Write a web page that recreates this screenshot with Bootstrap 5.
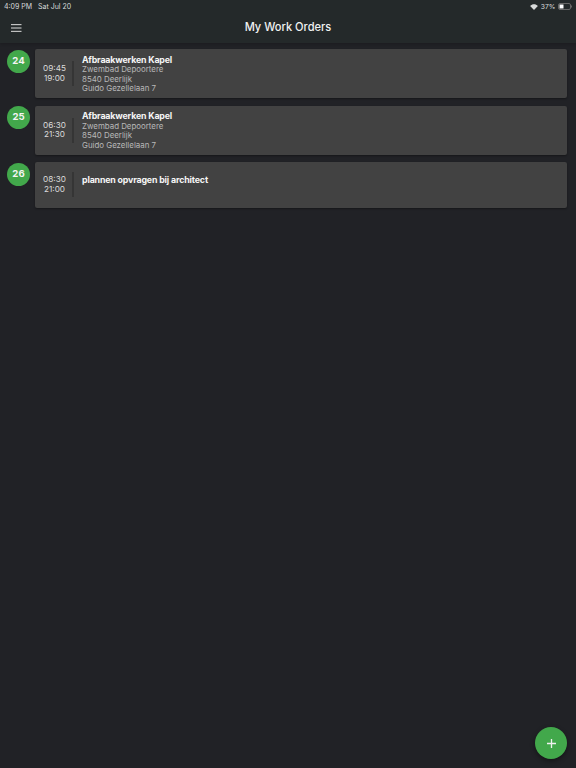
<!DOCTYPE html>
<html lang="en">
<head>
<meta charset="utf-8">
<title>My Work Orders</title>
<link rel="stylesheet" href="https://cdn.jsdelivr.net/npm/bootstrap@5.3.0/dist/css/bootstrap.min.css">
<style>
html,body{height:100%}
body{background:#212226;font-family:Inter,"Liberation Sans",sans-serif;color:#fff;width:576px;height:768px;overflow:hidden}
.screen{height:768px;position:relative}
.topbar{background:#24292a;height:43px;box-shadow:0 1px 3px rgba(0,0,0,.2)}
.status{height:13px;font-size:7px;line-height:13px;padding:0 4px;color:#d8dada}
.titlerow{height:30px;padding:0 11px}
.page-title{font-size:11.100px;font-weight:500;color:#f0f1f1;margin:0;line-height:1}
.titlewrap{height:30px}
.orders{padding:6px 9px 0 7px;gap:7.500px}
.day{width:23px;height:23px;border-radius:50%;background:#42a84b;font-size:9.600px;font-weight:700;color:#f4f4f4;flex:none;margin-top:.5px}
.wo{background:#424242;border-radius:2px;box-shadow:0 1px 2px rgba(0,0,0,.35);flex:1;margin-left:5px;height:49px}
.wo-short{height:45.500px}
.times{width:37px;flex:none;font-size:8.200px;line-height:9.600px;color:#dcdcdc;text-align:center;padding:.5px 0 0 2px}
.sep{width:1.500px;height:25px;background:#353535;margin-right:8.500px;flex:none}
.body-text{padding-top:5.500px}
.body-short{padding-top:12.500px}
.wo-title{font-size:8.800px;font-weight:700;line-height:10.500px;color:#f6f6f6;letter-spacing:-.15px}
.wo-line{font-size:7.900px;line-height:9.500px;color:#b8b8b8}
.fab{position:absolute;right:9px;bottom:9px;width:32px;height:32px;border-radius:50%;background:#42a84b;box-shadow:0 2px 5px rgba(0,0,0,.4);padding:0;border:0}
.sb-gap{gap:2.500px}
.pct{font-size:6.800px}
</style>
</head>
<body>
<div class="screen d-flex flex-column">
  <header class="topbar flex-shrink-0">
    <div class="status d-flex justify-content-between align-items-center">
      <span>4:09 PM&nbsp;&nbsp;&nbsp;Sat Jul 20</span>
      <span class="d-flex align-items-center sb-gap">
        <svg width="8" height="6" viewBox="0 0 18 14" aria-hidden="true"><path d="M9 14 0 4.500C5-.5 13-.5 18 4.500Z" fill="#d8dada"/></svg>
        <span class="pct">37%</span>
        <svg width="14" height="7" viewBox="0 0 14 7" aria-hidden="true"><rect x=".5" y=".5" width="12" height="6" rx="1.500" fill="none" stroke="#666"/><rect x="1.500" y="1.500" width="4" height="4" fill="#fff"/><rect x="13" y="2.500" width="1" height="2" fill="#666"/></svg>
      </span>
    </div>
    <div class="titlerow position-relative d-flex align-items-center">
      <svg width="10.500" height="8" viewBox="0 0 11 8" aria-hidden="true"><path d="M0 .5h11M0 4h11M0 7.500h11" stroke="#e8e8e8" stroke-width="1"/></svg>
      <div class="titlewrap position-absolute top-0 start-0 w-100 d-flex align-items-center justify-content-center"><h1 class="page-title">My Work Orders</h1></div>
    </div>
  </header>
  <main class="orders d-flex flex-column">
    <div class="d-flex">
      <div class="day d-flex align-items-center justify-content-center">24</div>
      <div class="wo d-flex align-items-start">
        <div class="times align-self-center">09:45<br>19:00</div><div class="sep align-self-center"></div>
        <div class="body-text"><div class="wo-title">Afbraakwerken Kapel</div><div class="wo-line">Zwembad Depoortere</div><div class="wo-line">8540 Deerlijk</div><div class="wo-line">Guido Gezellelaan 7</div></div>
      </div>
    </div>
    <div class="d-flex">
      <div class="day d-flex align-items-center justify-content-center">25</div>
      <div class="wo d-flex align-items-start">
        <div class="times align-self-center">06:30<br>21:30</div><div class="sep align-self-center"></div>
        <div class="body-text"><div class="wo-title">Afbraakwerken Kapel</div><div class="wo-line">Zwembad Depoortere</div><div class="wo-line">8540 Deerlijk</div><div class="wo-line">Guido Gezellelaan 7</div></div>
      </div>
    </div>
    <div class="d-flex">
      <div class="day d-flex align-items-center justify-content-center">26</div>
      <div class="wo wo-short d-flex align-items-start">
        <div class="times align-self-center">08:30<br>21:00</div><div class="sep align-self-center"></div>
        <div class="body-short"><div class="wo-title">plannen opvragen bij architect</div></div>
      </div>
    </div>
  </main>
  <button class="fab btn d-flex align-items-center justify-content-center" type="button" aria-label="Add">
    <svg width="9" height="9" viewBox="0 0 9 9" aria-hidden="true"><path d="M4.500 0v9M0 4.500h9" stroke="#f0f0f0" stroke-width="1.300"/></svg>
  </button>
</div>
<script src="https://cdn.jsdelivr.net/npm/bootstrap@5.3.0/dist/js/bootstrap.bundle.min.js"></script>
</body>
</html>
